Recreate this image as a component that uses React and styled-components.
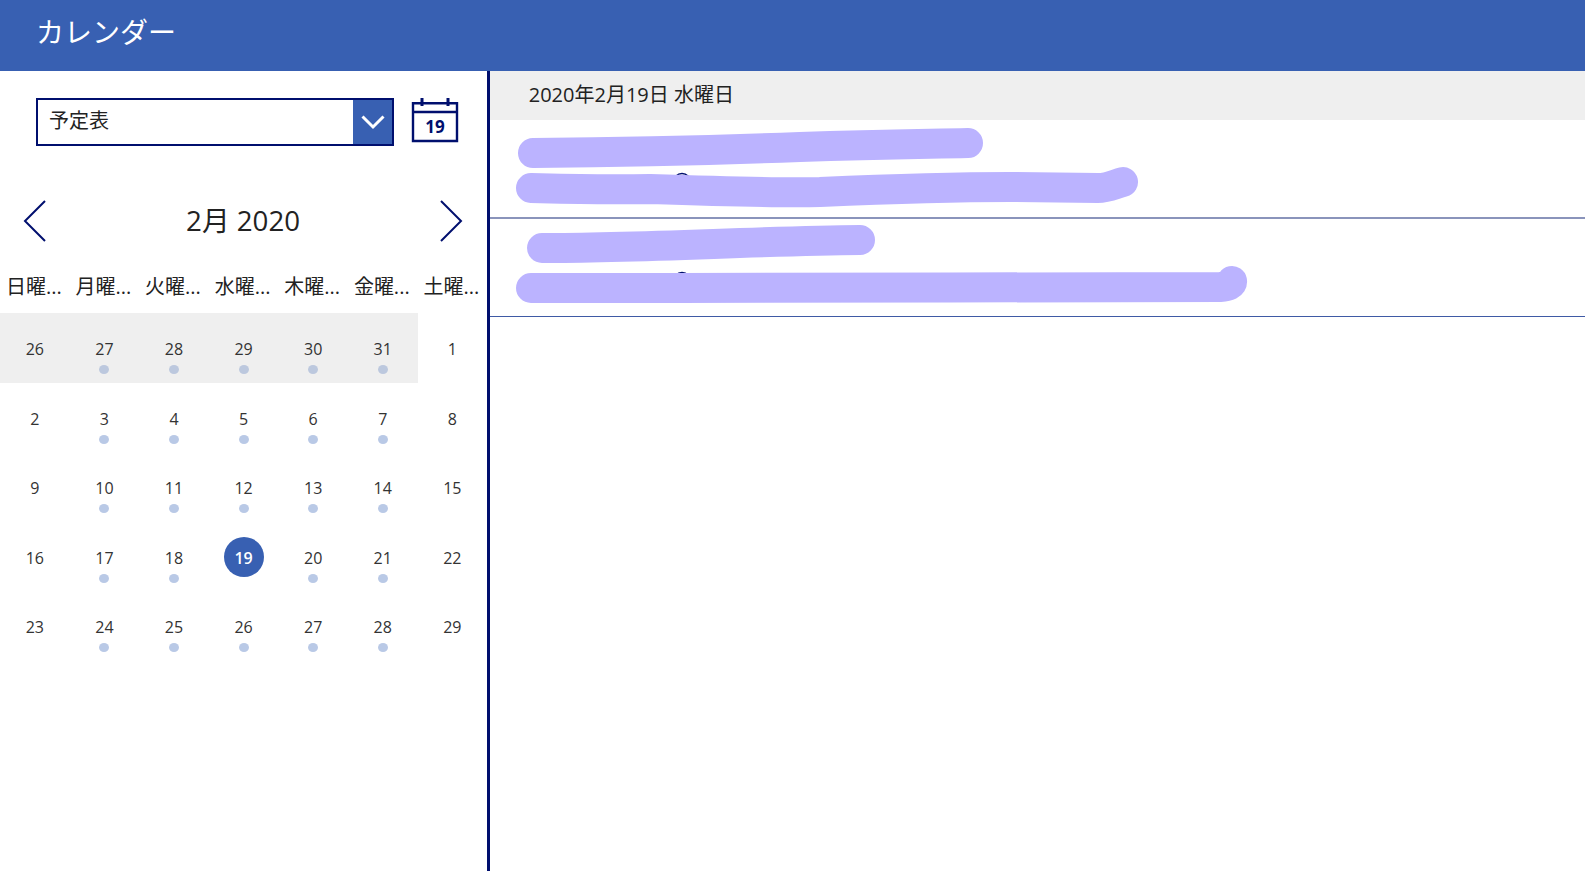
import styled, { createGlobalStyle } from 'styled-components';

const GlobalStyle = createGlobalStyle`
  html, body {
    margin: 0;
    padding: 0;
    height: 100%;
    background: #fff;
    overflow: hidden;
  }
  body {
    font-family: 'Open Sans', 'Noto Sans CJK JP', sans-serif;
  }
`;

const Page = styled.div`
  display: flex;
  flex-direction: column;
  width: 1585px;
  height: 871px;
`;

const Header = styled.header`
  display: flex;
  align-items: center;
  flex: 0 0 71px;
  height: 71px;
  padding: 0 0 9px 36px;
  box-sizing: border-box;
  background: #3860b2;
  color: #fff;
  font-size: 28px;
`;

const Body = styled.div`
  display: flex;
  flex: 1;
  min-height: 0;
`;

const Sidebar = styled.aside`
  flex: 0 0 490px;
  box-sizing: border-box;
  border-right: 3px solid #000f6e;
`;

const Toolbar = styled.div`
  display: flex;
  align-items: flex-start;
  gap: 17px;
  padding: 27px 0 0 36px;
  height: 103px;
  box-sizing: border-box;
`;

const Select = styled.div`
  display: flex;
  width: 358px;
  height: 48px;
  box-sizing: border-box;
  border: 2px solid #000f6e;
`;

const SelectValue = styled.div`
  flex: 1;
  padding: 3px 0 0 11px;
  font-size: 20px;
  line-height: 35px;
  color: #222;
`;

const SelectButton = styled.div`
  display: flex;
  align-items: center;
  justify-content: center;
  width: 39px;
  background: #3860b2;
`;

const CalendarIcon = styled.svg`
  display: block;
`;

const MonthBar = styled.div`
  display: flex;
  align-items: center;
  justify-content: space-between;
  height: 42px;
  padding: 26px 24px 0 23px;
`;

const MonthTitle = styled.div`
  font-size: 27.7px;
  color: #222;
  line-height: 40px;
  padding-bottom: 3px;
`;

const Weekdays = styled.div`
  display: grid;
  grid-template-columns: repeat(7, 69.6px);
  height: 42px;
  margin: 24px 0 0 -1px;
`;

const Weekday = styled.div`
  text-align: center;
  font-size: 20px;
  line-height: 42px;
  color: #222;
  white-space: nowrap;
`;

const Days = styled.div`
  display: grid;
  grid-template-columns: repeat(7, 69.6px);
  grid-auto-rows: 69.6px;
  margin-top: 5px;
`;

const Day = styled.div`
  position: relative;
  display: flex;
  justify-content: center;
  background: ${({ $shaded }) => ($shaded ? '#efefef' : 'transparent')};
`;

const DayNumber = styled.div`
  position: relative;
  width: 40px;
  height: 40px;
  margin-top: 15px;
  border-radius: 50%;
  text-align: center;
  font-size: 16px;
  line-height: 42px;
  color: ${({ $selected }) => ($selected ? '#fff' : '#333')};
  background: ${({ $selected }) => ($selected ? '#3860b2' : 'transparent')};
  font-weight: ${({ $selected }) => ($selected ? 600 : 400)};
`;

const Dot = styled.span`
  position: absolute;
  left: 50%;
  top: 52px;
  width: 10px;
  height: 9px;
  margin-left: -5px;
  border-radius: 50%;
  background: ${({ $shaded }) => ($shaded ? '#bcc8de' : '#b9c9e6')};
`;

const Agenda = styled.main`
  flex: 1;
  min-width: 0;
`;

const DateBar = styled.div`
  height: 49px;
  padding-left: 38.6px;
  background: #efefef;
  font-size: 20px;
  line-height: 47px;
  color: #222;
`;

const EventRow = styled.div`
  position: relative;
  height: ${({ $last }) => ($last ? 98 : 99)}px;
  box-sizing: border-box;
  border-bottom: ${({ $last }) => ($last ? '1px solid #3f5aa5' : '2px solid #8a94bb')};
`;

const EventPin = styled.svg`
  display: block;
  margin-left: 182px;
  padding-top: 52px;
`;

const Scribble = styled.svg`
  position: absolute;
  left: 0;
  top: 0;
  overflow: visible;
  pointer-events: none;
`;

const NAVY = '#000f6e';
const SCRIBBLE = '#bbb3ff';
const weekdays = ['日', '月', '火', '水', '木', '金', '土'];

// 2月 2020: the grid starts on Sunday 26 January
const weeks = [
  [26, 27, 28, 29, 30, 31, 1],
  [2, 3, 4, 5, 6, 7, 8],
  [9, 10, 11, 12, 13, 14, 15],
  [16, 17, 18, 19, 20, 21, 22],
  [23, 24, 25, 26, 27, 28, 29],
];

function Chevron({ flip }) {
  const d = flip ? 'M2 1 L22 21 L2 41' : 'M22 1 L2 21 L22 41';
  return (
    <svg width="24" height="42" viewBox="0 0 24 42">
      <path d={d} fill="none" stroke={NAVY} strokeWidth="2" />
    </svg>
  );
}

function CalendarGlyph() {
  return (
    <CalendarIcon width="48" height="46" viewBox="0 0 48 46">
      <path d="M2 5.2 H46 V43 H2 Z M2 14 H46" fill="none" stroke={NAVY} strokeWidth="2.4" />
      <path d="M11 0 V8 M37 0 V8" stroke={NAVY} strokeWidth="3" />
      <text x="24" y="35" textAnchor="middle" fontSize="17" fontWeight="700" fill={NAVY} fontFamily="Open Sans, sans-serif">
        19
      </text>
    </CalendarIcon>
  );
}

function PinGlyph() {
  return (
    <EventPin width="20" height="32" viewBox="0 0 20 32">
      <circle cx="10" cy="10" r="8.5" fill="none" stroke={NAVY} strokeWidth="1.6" />
      <circle cx="10" cy="10" r="5" fill="none" stroke={NAVY} strokeWidth="1.2" />
      <path d="M10 18.5 V32" stroke={NAVY} strokeWidth="1" />
    </EventPin>
  );
}

export default function App() {
  return (
    <Page>
      <GlobalStyle />
      <Header>カレンダー</Header>
      <Body>
        <Sidebar>
          <Toolbar>
            <Select>
              <SelectValue>予定表</SelectValue>
              <SelectButton>
                <svg width="24" height="15" viewBox="0 0 24 15">
                  <path d="M1.5 1.5 L12 12 L22.5 1.5" fill="none" stroke="#fff" strokeWidth="3" />
                </svg>
              </SelectButton>
            </Select>
            <CalendarGlyph />
          </Toolbar>
          <MonthBar>
            <Chevron />
            <MonthTitle>2月 2020</MonthTitle>
            <Chevron flip />
          </MonthBar>
          <Weekdays>
            {weekdays.map((w) => (
              <Weekday key={w}>{w}曜...</Weekday>
            ))}
          </Weekdays>
          <Days>
            {weeks.map((week, row) =>
              week.map((day, col) => {
                const shaded = row === 0 && col < 6;
                const selected = row === 3 && col === 3;
                const hasEvents = col > 0 && col < 6 && !selected;
                return (
                  <Day key={`${row}-${col}`} $shaded={shaded}>
                    <DayNumber $selected={selected}>{day}</DayNumber>
                    {hasEvents && <Dot $shaded={shaded} />}
                  </Day>
                );
              })
            )}
          </Days>
        </Sidebar>
        <Agenda>
          <DateBar>2020年2月19日 水曜日</DateBar>
          <EventRow>
            <PinGlyph />
            <Scribble width="1095" height="98">
              <path
                d="M43 33 C150 32 230 30 310 27 S430 24 478 23"
                fill="none"
                stroke={SCRIBBLE}
                strokeWidth="30"
                strokeLinecap="round"
              />
              <path
                d="M41 68 C80 69 110 70 160 69 C220 71 280 73 330 72 C400 69 450 67 520 67 L608 68 C618 68 625 64 633 62"
                fill="none"
                stroke={SCRIBBLE}
                strokeWidth="30"
                strokeLinecap="round"
                strokeLinejoin="round"
              />
            </Scribble>
          </EventRow>
          <EventRow $last>
            <PinGlyph />
            <Scribble width="1095" height="98">
              <path
                d="M52 29 C150 29 270 22 370 21"
                fill="none"
                stroke={SCRIBBLE}
                strokeWidth="30"
                strokeLinecap="round"
              />
              <path
                d="M41 69 L190 69 C310 68 610 69 730 68 Q743 67 742 62"
                fill="none"
                stroke={SCRIBBLE}
                strokeWidth="30"
                strokeLinecap="round"
                strokeLinejoin="round"
              />
            </Scribble>
          </EventRow>
        </Agenda>
      </Body>
    </Page>
  );
}
